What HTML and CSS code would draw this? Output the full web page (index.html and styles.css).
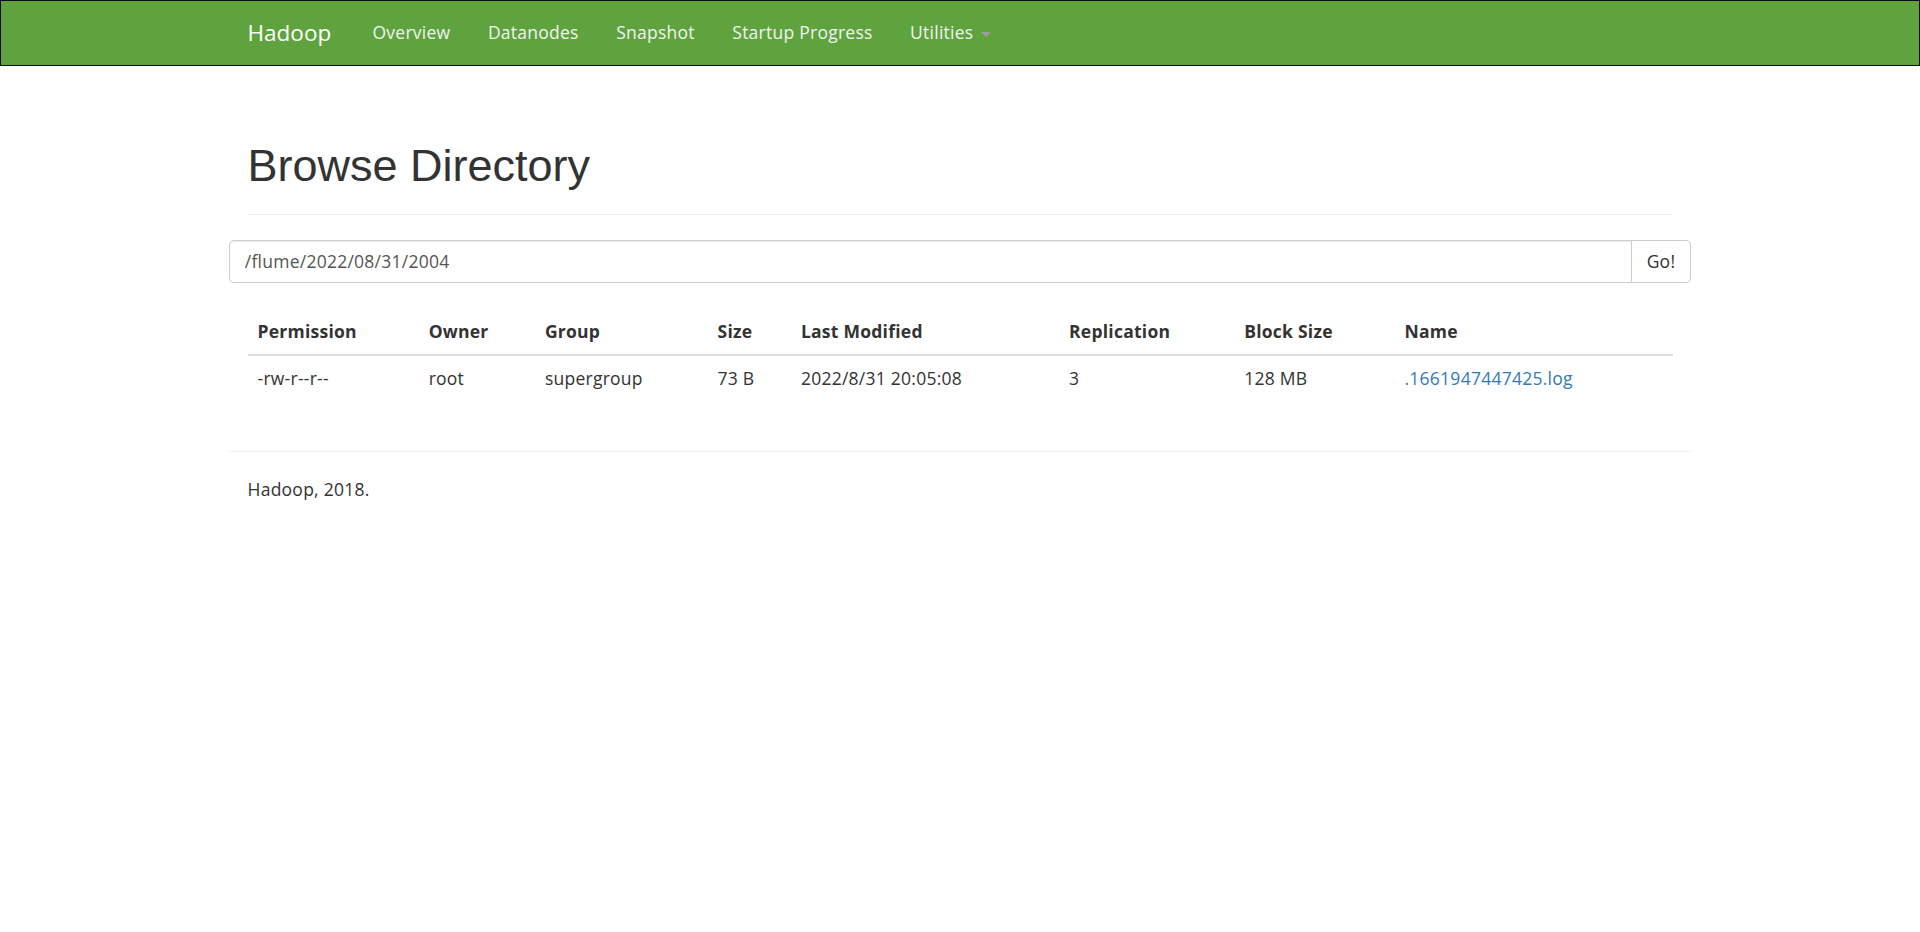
FILE: index.html
```
<!DOCTYPE html>
<html>
<head>
<meta charset="utf-8">
<title>Browsing HDFS</title>
<link rel="stylesheet" href="styles.css">
</head>
<body>
<header class="navbar">
  <div class="container nav-container">
    <div class="navbar-brand">Hadoop</div>
    <ul class="navbar-nav">
      <li><a href="#">Overview</a></li>
      <li><a href="#">Datanodes</a></li>
      <li><a href="#">Snapshot</a></li>
      <li><a href="#">Startup Progress</a></li>
      <li><a href="#">Utilities <b class="caret"></b></a></li>
    </ul>
  </div>
</header>

<div class="container main">
  <div class="page-header">
    <h1>Browse Directory</h1>
  </div>
  <div class="row">
    <form class="input-group">
      <input type="text" class="form-control" value="/flume/2022/08/31/2004">
      <button class="btn" type="button">Go!</button>
    </form>
  </div>
  <div class="spacer"></div>
  <div id="panel">
    <table class="table">
      <colgroup>
        <col class="c1"><col class="c2"><col class="c3"><col class="c4"><col class="c5"><col class="c6"><col class="c7"><col class="c8">
      </colgroup>
      <thead>
        <tr>
          <th>Permission</th>
          <th>Owner</th>
          <th>Group</th>
          <th>Size</th>
          <th>Last Modified</th>
          <th>Replication</th>
          <th>Block Size</th>
          <th>Name</th>
        </tr>
      </thead>
      <tbody>
        <tr>
          <td>-rw-r--r--</td>
          <td>root</td>
          <td>supergroup</td>
          <td>73 B</td>
          <td>2022/8/31 20:05:08</td>
          <td>3</td>
          <td>128 MB</td>
          <td><a href="#">.1661947447425.log</a></td>
        </tr>
      </tbody>
    </table>
  </div>
  <div class="row footer-row">
    <hr>
    <div class="col-footer"><p>Hadoop, 2018.</p></div>
  </div>
</div>
</body>
</html>
```
FILE: styles.css
```
html {
  zoom: 1.25;
}
* {
  box-sizing: border-box;
}
body {
  margin: 0;
  font-family: "Open Sans", "Liberation Sans", Arial, sans-serif;
  font-size: 14px;
  line-height: 1.42857143;
  letter-spacing: 0.2px;
  color: #333;
  background: #fff;
}
a {
  color: #337ab7;
  text-decoration: none;
}
.container {
  width: 1170px;
  margin: 0 auto;
  padding: 0 15px;
}

/* navbar */
.navbar {
  box-sizing: content-box;
  min-height: 51px;
  background-color: #5fa33e;
  border: 1px solid #080808;
  margin: 0;
}
.nav-container {
  display: flex;
  align-items: flex-start;
  padding-top: 0.5px;
}
.navbar-brand {
  margin-left: -15px;
  padding: 15px;
  height: 50px;
  font-size: 18px;
  line-height: 20px;
  letter-spacing: 0;
  color: #fff;
  width: 100px;
}
.navbar-nav {
  display: flex;
  list-style: none;
  margin: 0;
  padding: 0;
}
.navbar-nav a {
  display: block;
  padding: 15px;
  line-height: 20px;
  color: #f2f2f2;
}
.caret {
  display: inline-block;
  width: 0;
  height: 0;
  margin-left: 2px;
  vertical-align: middle;
  border-top: 4px solid #9d9d9d;
  border-left: 4px solid transparent;
  border-right: 4px solid transparent;
}

/* main */
.main {
  padding-top: 40px;
}
.page-header {
  margin: 0 0 20px;
  padding-bottom: 9px;
  border-bottom: 1px solid #eee;
}
.page-header h1 {
  margin: 20px 0 10px;
  font-family: "Liberation Sans", Arial, sans-serif;
  font-size: 36px;
  font-weight: 500;
  line-height: 1.1;
  letter-spacing: 0;
  color: #333;
}
.row {
  margin: 0 -15px;
}
.input-group {
  display: flex;
  margin: 0;
}
.form-control {
  flex: 1;
  height: 34px;
  padding: 6px 12px;
  font-family: inherit;
  font-size: 14px;
  line-height: 1.42857143;
  letter-spacing: 0.2px;
  color: #555;
  background: #fff;
  border: 1px solid #ccc;
  border-radius: 4px 0 0 4px;
  box-shadow: inset 0 1px 1px rgba(0, 0, 0, .075);
  outline: none;
}
.btn {
  height: 34px;
  margin-left: -1px;
  padding: 6px 12px;
  font-family: inherit;
  font-size: 14px;
  line-height: 1.42857143;
  letter-spacing: 0.2px;
  color: #333;
  background: #fff;
  border: 1px solid #ccc;
  border-radius: 0 4px 4px 0;
}
.spacer {
  height: 21px;
}

/* table */
.table {
  width: 100%;
  table-layout: fixed;
  border-collapse: collapse;
  border-spacing: 0;
  margin-bottom: 20px;
}
.c1 { width: 136.9px; }
.c2 { width: 93px; }
.c3 { width: 138.1px; }
.c4 { width: 66.7px; }
.c5 { width: 214.5px; }
.c6 { width: 140.1px; }
.c7 { width: 128.3px; }
.c8 { width: auto; }
.table th {
  padding: 8px;
  text-align: left;
  vertical-align: bottom;
  font-weight: bold;
  line-height: 1.42857143;
  border-bottom: 2px solid #ddd;
  white-space: nowrap;
}
.table td {
  padding: 8px;
  line-height: 1.42857143;
  vertical-align: top;
  border-top: 1px solid #ddd;
  white-space: nowrap;
}

/* footer */
.footer-row {
  display: flow-root;
}
.footer-row hr {
  margin: 20px 0;
  border: 0;
  border-top: 1px solid #eee;
  height: 0;
}
.col-footer {
  padding: 0 15px;
}
.col-footer p {
  margin: 0 0 10px;
}
```
